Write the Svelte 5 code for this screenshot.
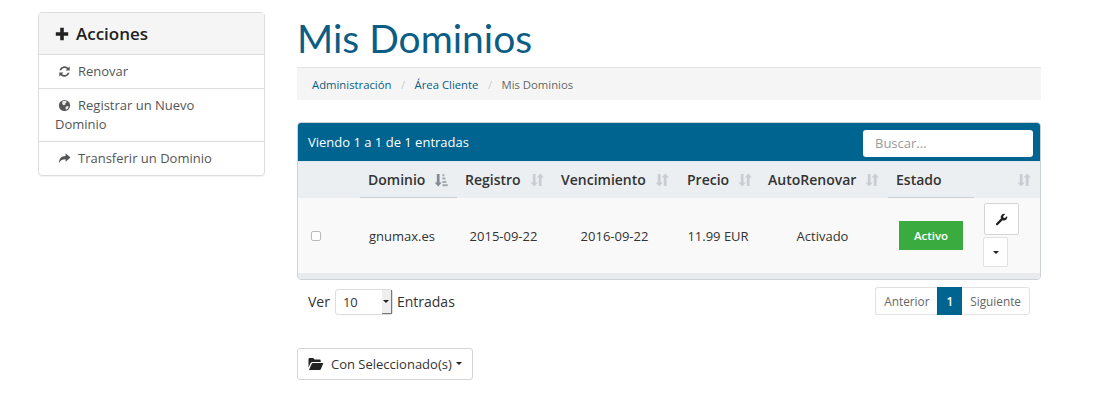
<script>
    const actions = [
        { label: "Renovar", icon: "refresh" },
        { label: "Registrar un Nuevo Dominio", icon: "globe" },
        { label: "Transferir un Dominio", icon: "share" }
    ];

    const columns = [
        { label: "", width: 62 },
        { label: "Dominio", width: 97, active: true },
        { label: "Registro", width: 96 },
        { label: "Vencimiento", width: 126 },
        { label: "Precio", width: 81 },
        { label: "AutoRenovar", width: 128 },
        { label: "Estado", width: 86, plain: true },
        { label: "", width: 67 }
    ];
</script>

{#snippet sortIcon(active)}
    <svg class="sort" viewBox="0 0 14 14" width="14" height="14">
        <path d="M2.8 1h2.8v8.6H7.8L4.2 13.6 0.6 9.6H2.8z" fill={active ? "#858d94" : "#c8ced3"} />
        {#if active}
            <path d="M8.4 1.2h2v2h-2zM8.4 4.6h3v2h-3zM8.4 8h4v2h-4zM8.4 11.2h5.4v2H8.4z" fill="#a3aab0" />
        {:else}
            <path d="M8.8 13V4.4H6.6L10.2 0.4 13.8 4.4H11.6V13z" fill="#c8ced3" />
        {/if}
    </svg>
{/snippet}

<div class="page">
    <aside class="sidebar">
        <div class="side-head">
            <svg class="plus" viewBox="0 0 14 14" width="14" height="14">
                <path d="M5.2 0.8h3.6v4.4h4.4v3.6H8.8v4.4H5.2V8.8H0.8V5.2h4.4z" fill="#222" />
            </svg>
            Acciones
        </div>
        {#each actions as item}
            <div class="side-item">
                <span class="side-icon">
                    {#if item.icon === "refresh"}
                        <svg viewBox="0 0 14 14" width="13" height="13">
                            <path d="M1.6 5.6A5.6 5.6 0 0 1 11 3L12.6 1.6V6H8.2L9.8 4.3A3.8 3.8 0 0 0 3.5 5.6z" fill="#555" />
                            <path d="M12.4 8.4A5.6 5.6 0 0 1 3 11L1.4 12.4V8H5.8L4.2 9.7A3.8 3.8 0 0 0 10.5 8.4z" fill="#555" />
                        </svg>
                    {:else if item.icon === "globe"}
                        <svg viewBox="0 0 14 14" width="13" height="13">
                            <circle cx="7" cy="7" r="6" fill="#555" />
                            <path d="M5 2.2 8.6 2 9.4 3.6 7.6 5 8 6.2 5.8 6.6 4.4 5.2zM8.4 8 11.4 7.6 11 10 9 11.6 8 10.6z" fill="#e8e8e8" />
                        </svg>
                    {:else}
                        <svg viewBox="0 0 14 14" width="13" height="13">
                            <path d="M8.2 1.4 13.4 6 8.2 10.6V7.8C4.8 7.8 2.6 8.6 1 12 1 7.2 3.4 4.2 8.2 4.2z" fill="#555" />
                        </svg>
                    {/if}
                </span>{item.label}
            </div>
        {/each}
    </aside>

    <main class="main">
        <h1>Mis Dominios</h1>
        <nav class="crumbs">
            <span class="link">Administración</span>
            <span class="sep">/</span>
            <span class="link">Área Cliente</span>
            <span class="sep">/</span>
            <span class="current">Mis Dominios</span>
        </nav>

        <section class="panel">
            <header class="panel-head">
                <span>Viendo 1 a 1 de 1 entradas</span>
                <input class="search" type="text" placeholder="Buscar..." />
            </header>
            <table>
                <colgroup>
                    {#each columns as col}
                        <col style="width: {col.width}px" />
                    {/each}
                </colgroup>
                <thead>
                    <tr>
                        {#each columns as col, i}
                            <th class:ruled={i === 1 || i === 6}>
                                {#if i > 0}
                                    <div class="th-inner" class:end={!col.label}>
                                        {#if col.label}
                                            <span>{col.label}</span>
                                        {/if}
                                        {#if !col.plain}
                                            {@render sortIcon(col.active)}
                                        {/if}
                                    </div>
                                {/if}
                            </th>
                        {/each}
                    </tr>
                </thead>
                <tbody>
                    <tr>
                        <td><input class="check" type="checkbox" /></td>
                        <td class="domain">gnumax.es</td>
                        <td class="val">2015-09-22</td>
                        <td class="val">2016-09-22</td>
                        <td class="val">11.99 EUR</td>
                        <td class="val">Activado</td>
                        <td><span class="status">Activo</span></td>
                        <td>
                            <div class="tools">
                                <button class="tool wrench" aria-label="Gestionar">
                                    <svg viewBox="0 0 14 14" width="13" height="13">
                                        <path d="M1.2 11.2 6.4 6A3.6 3.6 0 0 1 11 1.2L8.8 3.4 9.2 5 10.8 5.4 13 3.2A3.6 3.6 0 0 1 8.2 7.8L3 13A1.3 1.3 0 0 1 1.2 11.2z" fill="#222" />
                                    </svg>
                                </button>
                                <button class="tool more" aria-label="Más"><span class="caret dark"></span></button>
                            </div>
                        </td>
                    </tr>
                </tbody>
            </table>
            <div class="panel-foot"></div>
        </section>

        <div class="pager-row">
            <div class="length">
                <span>Ver</span>
                <div class="select">
                    <span>10</span>
                    <span class="spin"><span class="caret dark"></span></span>
                </div>
                <span>Entradas</span>
            </div>
            <div class="pager">
                <span class="page-btn">Anterior</span>
                <span class="page-btn on">1</span>
                <span class="page-btn">Siguiente</span>
            </div>
        </div>

        <button class="bulk">
            <svg viewBox="0 0 16 14" width="16" height="14">
                <path d="M0.5 10.5V2.2C0.5 1.5 1 1 1.7 1H5.2L6.6 2.6H11.6C12.2 2.6 12.7 3.1 12.7 3.8V5H4.4C3.6 5 3 5.3 2.6 6z" fill="#222" />
                <path d="M1 13 3.6 6.9C3.8 6.4 4.2 6 4.9 6H15.4L12.9 12C12.7 12.6 12.2 13 11.6 13z" fill="#222" />
            </svg>
            Con Seleccionado(s)
            <span class="caret dark"></span>
        </button>
    </main>
</div>

<style>
    :global(body) {
        background: #fff;
    }

    .page {
        display: flex;
        align-items: flex-start;
        gap: 32px;
        width: 1100px;
        height: 400px;
        padding: 12px 0 0 38px;
        box-sizing: border-box;
        overflow: hidden;
        font-family: "Open Sans", sans-serif;
        font-size: 13px;
        color: #333;
    }

    .sidebar {
        width: 227px;
        flex: none;
        box-sizing: border-box;
        border: 1px solid #ddd;
        border-radius: 4px;
        box-shadow: 0 1px 1px rgba(0, 0, 0, 0.05);
    }

    .side-head {
        display: flex;
        align-items: center;
        gap: 7px;
        height: 42px;
        padding-left: 16px;
        box-sizing: border-box;
        background: #f5f5f5;
        font-size: 17px;
        font-weight: 600;
        color: #222;
        border-bottom: 1px solid #ddd;
    }

    .side-item {
        padding: 7px 16px;
        line-height: 19px;
        color: #555;
        border-bottom: 1px solid #ddd;
    }

    .side-item:last-child {
        border-bottom: 0;
    }

    .side-icon {
        display: inline-block;
        width: 23px;
        padding-left: 3px;
        box-sizing: border-box;
        vertical-align: -2px;
        line-height: 0;
    }

    .main {
        width: 744px;
        flex: none;
    }

    h1 {
        margin: 0;
        height: 55px;
        font-family: "Lato", sans-serif;
        font-size: 39px;
        line-height: 52px;
        font-weight: 400;
        color: #0b5d85;
    }

    .crumbs {
        display: flex;
        align-items: center;
        height: 33px;
        padding-left: 15px;
        background: #f5f5f5;
        border-top: 1px solid #e4e4e4;
        box-sizing: border-box;
        font-size: 11.3px;
    }

    .link {
        color: #0b5d85;
    }

    .current {
        color: #666;
    }

    .sep {
        margin: 0 9.5px;
        color: #ccc;
    }

    .panel {
        margin-top: 22px;
        border: 1px solid #ccd2d7;
        border-radius: 4px;
        overflow: hidden;
    }

    .panel-head {
        display: flex;
        align-items: center;
        justify-content: space-between;
        height: 38px;
        padding: 0 7px 0 10px;
        background: #006491;
        color: #fff;
        font-size: 13px;
        font-weight: 500;
    }

    .search {
        width: 170px;
        height: 27px;
        margin-top: 2px;
        padding: 0 12px;
        box-sizing: border-box;
        border: 0;
        border-radius: 3px;
        background: #fff;
        font: 13px "Open Sans", sans-serif;
    }

    .search::placeholder {
        color: #9a9a9a;
    }

    table {
        width: 100%;
        table-layout: fixed;
        border-collapse: collapse;
    }

    th {
        height: 36px;
        padding: 0;
        background: #ebeff2;
        border-top: 1px solid #dce9f0;
        box-sizing: border-box;
        font-size: 14px;
        font-weight: 600;
        text-align: left;
        color: #333;
    }

    th.ruled {
        border-bottom: 1px solid #c9cfd4;
    }

    .th-inner {
        display: flex;
        align-items: center;
        gap: 9px;
        padding: 0 8px;
    }

    .th-inner.end {
        justify-content: flex-end;
        padding-right: 10px;
    }

    .sort {
        flex: none;
    }

    td {
        height: 75px;
        padding: 0;
        box-sizing: border-box;
        background: #f9f9f9;
        text-align: center;
        font-size: 13px;
        color: #333;
    }

    td.domain {
        padding: 2px 0 0 9px;
        text-align: left;
    }

    td.val {
        padding: 2px 3px 0 0;
    }

    .check {
        appearance: none;
        display: block;
        width: 10px;
        height: 10px;
        margin: 2px 0 0 13px;
        border: 1px solid #bbb;
        border-radius: 2px;
        background: #fff;
    }

    .status {
        display: inline-block;
        width: 64px;
        line-height: 29px;
        background: #3aab3f;
        color: #fff;
        font-size: 11.5px;
        font-weight: 600;
    }

    .tools {
        display: flex;
        flex-direction: column;
        align-items: flex-start;
        gap: 2px;
        padding-left: 9px;
    }

    .tool {
        display: flex;
        align-items: center;
        justify-content: center;
        padding: 0;
        background: #fff;
        border: 1px solid #d4d4d4;
        border-radius: 2px;
    }

    .wrench {
        width: 35px;
        height: 32px;
        margin-left: 1px;
    }

    .more {
        width: 25px;
        height: 30px;
        border-color: #e2e2e2;
    }

    .caret {
        display: inline-block;
        width: 0;
        height: 0;
        border-left: 3px solid transparent;
        border-right: 3px solid transparent;
        border-top: 3px solid #fff;
    }

    .caret.dark {
        border-top-color: #222;
    }

    .panel-foot {
        height: 6px;
        background: #e8ebee;
    }

    .pager-row {
        display: flex;
        align-items: center;
        justify-content: space-between;
        height: 28px;
        margin-top: 7px;
        padding: 0 11px;
    }

    .length {
        display: flex;
        align-items: center;
        gap: 4px;
        margin-top: 2px;
        font-size: 14px;
        color: #333;
    }

    .select {
        position: relative;
        width: 58px;
        height: 26px;
        margin-left: 1px;
        padding-left: 7px;
        box-sizing: border-box;
        border: 1px solid #ddd;
        border-radius: 3px;
        font-size: 13px;
        line-height: 24px;
    }

    .spin {
        position: absolute;
        top: 0;
        right: 0;
        bottom: 0;
        width: 10px;
        display: flex;
        align-items: center;
        justify-content: center;
        background: #eee;
        border-right: 1px solid #777;
        border-bottom: 1px solid #777;
        box-sizing: border-box;
    }

    .pager {
        display: flex;
        font-size: 11.8px;
        color: #666;
    }

    .page-btn {
        height: 28px;
        line-height: 27px;
        padding: 0 8px;
        box-sizing: border-box;
        border: 1px solid #e2e2e2;
        background: #fff;
    }

    .page-btn:first-child {
        border-right: 0;
        border-radius: 3px 0 0 3px;
    }

    .page-btn:last-child {
        border-left: 0;
        border-radius: 0 3px 3px 0;
    }

    .page-btn.on {
        background: #006491;
        border-color: #006491;
        color: #fff;
        font-weight: 600;
    }

    .bulk {
        display: flex;
        align-items: center;
        gap: 4px;
        width: 176px;
        height: 32px;
        margin-top: 33px;
        padding: 0 0 0 10px;
        background: #fff;
        border: 1px solid #d4d4d4;
        border-radius: 3px;
        font: 13px "Open Sans", sans-serif;
        color: #333;
    }

    .bulk svg {
        margin-right: 3px;
    }
</style>
